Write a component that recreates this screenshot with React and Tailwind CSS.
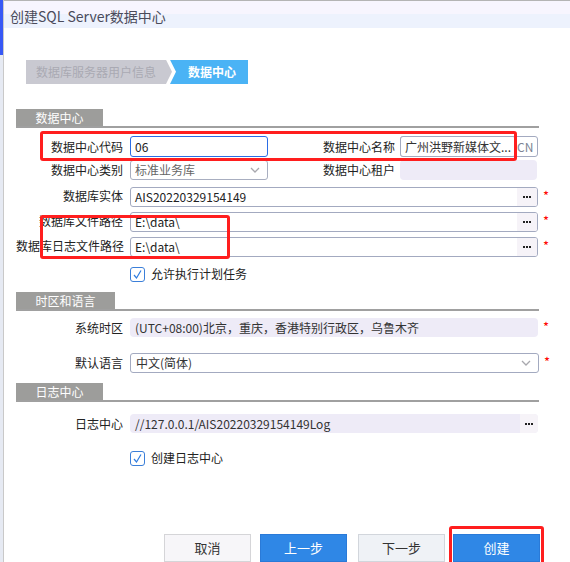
import React from 'react';

const Dots = () => (
  <div className="flex items-center gap-[1px]">
    <span className="w-[2px] h-[2px] bg-[#222]" />
    <span className="w-[2px] h-[2px] bg-[#222]" />
    <span className="w-[2px] h-[2px] bg-[#222]" />
  </div>
);

const Chevron = () => (
  <svg width="10" height="6" viewBox="0 0 10 6" className="shrink-0">
    <polyline points="1,1 5,5 9,1" fill="none" stroke="#a8a8ae" strokeWidth="1.3" />
  </svg>
);

const Star = () => <span className="ml-[5px] self-start pt-[2px] text-[13px] leading-none text-[#ff0000]">*</span>;

const Label = ({ children, w = 'w-[107px]' }) => (
  <div className={`${w} shrink-0 text-right whitespace-nowrap text-[#222]`}>{children}</div>
);

const Section = ({ title, w }) => (
  <div className="w-[523px]">
    <div className={`${w} h-[17px] bg-[#9d9d9b] text-white text-[12px] leading-[17px] text-center`}>{title}</div>
    <div className="h-[2px] bg-[#a0a0a0]" />
  </div>
);

const PathInput = ({ value }) => (
  <div className="flex h-[20px]">
    <Label>{value.label}</Label>
    <div className="ml-[7px] w-[408px] shrink-0 h-[20px] border border-[#a3aac0] rounded-[3px] bg-white flex items-center overflow-hidden">
      <span className="flex-1 pl-[4px] text-[#222]">{value.text}</span>
      <div className="w-[20px] h-full bg-[#f6f3f8] flex items-center justify-center"><Dots /></div>
    </div>
    <Star />
  </div>
);

const Check = ({ label }) => (
  <div className="flex items-center h-[16px] pl-[114px]">
    <div className="w-[15px] h-[15px] shrink-0 border border-[#3b7fd9] rounded-[3px] bg-white flex items-center justify-center">
      <svg width="11" height="11" viewBox="0 0 11 11">
        <polyline points="2,6 4.5,9 9,1.5" fill="none" stroke="#2f7de0" strokeWidth="1.2" />
      </svg>
    </div>
    <span className="ml-[6px] text-[#222]">{label}</span>
  </div>
);

export default function App() {
  return (
    <div className="relative w-[570px] h-[562px] overflow-hidden bg-white flex text-[12px] [font-family:'Noto_Sans_CJK_SC',sans-serif]">
      {/* background strip */}
      <div className="w-[3px] shrink-0 flex flex-col">
        <div className="h-[55px] bg-[#3758f5]" />
        <div className="flex-1 bg-[#e6eaf3]" />
      </div>

      <div className="flex-1 border-l border-[#c9c9c9] flex flex-col">
        {/* title */}
        <div className="h-[30px] border-t border-[#b4b4b4] bg-[linear-gradient(#f7f5fe_50%,#edf2fd_50%)] flex items-center pl-[6px] pt-[5px]">
          <span className="text-[14px] text-[#4b4b5b]">创建SQL Server数据中心</span>
        </div>

        {/* steps */}
        <div className="mt-[32px] ml-[22px] flex h-[27px]">
          <div className="w-[146px] h-full bg-[#c9c9d1] text-[#a9a9b3] pl-[10px] flex items-center text-[12px] [clip-path:polygon(0_0,calc(100%_-_6px)_0,100%_50%,calc(100%_-_6px)_100%,0_100%)]">
            数据库服务器用户信息
          </div>
          <div className="-ml-[2px] w-[78px] h-full bg-[#4ab3f5] text-white font-bold pl-[18px] flex items-center text-[12px] [clip-path:polygon(0_0,100%_0,100%_100%,0_100%,6px_50%)]">
            数据中心
          </div>
        </div>

        {/* form */}
        <div className="ml-[12px] flex flex-col">
          <div className="mt-[25px]"><Section title="数据中心" w="w-[87px]" /></div>

          <div className="mt-[8px] flex items-center h-[21px]">
            <Label>数据中心代码</Label>
            <div className="ml-[7px] w-[138px] shrink-0 h-[21px] border border-[#2b6de5] rounded-[3px] flex items-center pl-[4px] text-[#222]">06</div>
            <Label w="w-[127px]">数据中心名称</Label>
            <div className="ml-[5px] w-[138px] shrink-0 h-[21px] border border-[#a3aac0] rounded-[3px] flex items-center">
              <div className="-m-[1px] w-[116px] shrink-0 h-[21px] border border-[#a3aac0] rounded-[3px] bg-white flex items-center pl-[4px] text-[#333] whitespace-nowrap overflow-hidden">广州洪野新媒体文...</div>
              <span className="ml-[2px] text-[#7d8494]">CN</span>
            </div>
          </div>

          <div className="mt-[3px] flex items-center h-[20px]">
            <Label>数据中心类别</Label>
            <div className="ml-[7px] w-[138px] shrink-0 h-[20px] border border-[#a8aec0] rounded-[3px] flex items-center justify-between pl-[4px] pr-[7px] text-[#666]">
              标准业务库
              <Chevron />
            </div>
            <Label w="w-[127px]">数据中心租户</Label>
            <div className="ml-[5px] w-[137px] shrink-0 h-[20px] rounded-[4px] bg-[#eeebf7]" />
          </div>

          <div className="mt-[7px]"><PathInput value={{ label: '数据库实体', text: 'AIS20220329154149' }} /></div>
          <div className="mt-[5px]"><PathInput value={{ label: '数据库文件路径', text: 'E:\\data\\' }} /></div>
          <div className="mt-[5px]"><PathInput value={{ label: '数据库日志文件路径', text: 'E:\\data\\' }} /></div>

          <div className="mt-[9px]"><Check label="允许执行计划任务" /></div>

          <div className="mt-[10px]"><Section title="时区和语言" w="w-[99px]" /></div>

          <div className="mt-[7px] flex items-center h-[19px]">
            <Label>系统时区</Label>
            <div className="ml-[7px] w-[408px] shrink-0 h-[19px] rounded-[4px] bg-[#eeebf7] flex items-center pl-[5px] text-[#333] whitespace-nowrap">
              (UTC+08:00)北京，重庆，香港特别行政区，乌鲁木齐
            </div>
            <Star />
          </div>

          <div className="mt-[16px] flex items-center h-[20px]">
            <Label>默认语言</Label>
            <div className="ml-[7px] w-[409px] shrink-0 h-[20px] border border-[#a3aac0] rounded-[3px] flex items-center justify-between pl-[5px] pr-[7px] text-[#333]">
              中文(简体)
              <Chevron />
            </div>
            <Star />
          </div>

          <div className="mt-[10px]"><Section title="日志中心" w="w-[87px]" /></div>

          <div className="mt-[12px] flex items-center h-[19px]">
            <Label>日志中心</Label>
            <div className="ml-[7px] w-[408px] shrink-0 h-[19px] rounded-[4px] bg-[#eeebf7] flex items-center overflow-hidden">
              <span className="flex-1 pl-[5px] text-[#333]">//127.0.0.1/AIS20220329154149Log</span>
              <div className="w-[18px] h-full bg-[#f6f3f8] flex items-center justify-center"><Dots /></div>
            </div>
          </div>

          <div className="mt-[17px]"><Check label="创建日志中心" /></div>
        </div>

        {/* buttons */}
        <div className="mt-[68px] ml-[160px] flex text-[13px]">
          <button className="w-[87px] h-[28px] border border-[#d5d5d8] bg-[#f7f6f9] text-[#333]">取消</button>
          <button className="ml-[9px] w-[87px] h-[28px] border border-[#2a7ad8] bg-[#2f87e6] text-white">上一步</button>
          <button className="ml-[11px] w-[87px] h-[28px] border border-[#d2d6dc] bg-[#eff2f6] text-[#333]">下一步</button>
          <button className="ml-[8px] w-[87px] h-[28px] border border-[#2a7ad8] bg-[#2f87e6] text-white">创建</button>
        </div>
      </div>

      {/* red annotation boxes */}
      <div className="absolute left-[40px] top-[131px] w-[477px] h-[30px] border-[3px] border-[#ff1e1e] rounded-[3px]" />
      <div className="absolute left-[40px] top-[215px] w-[190px] h-[44px] border-[3px] border-[#ff1e1e] rounded-[3px]" />
      <div className="absolute left-[449px] top-[526px] w-[95px] h-[42px] border-[3px] border-[#ff1e1e] rounded-[3px]" />
    </div>
  );
}
